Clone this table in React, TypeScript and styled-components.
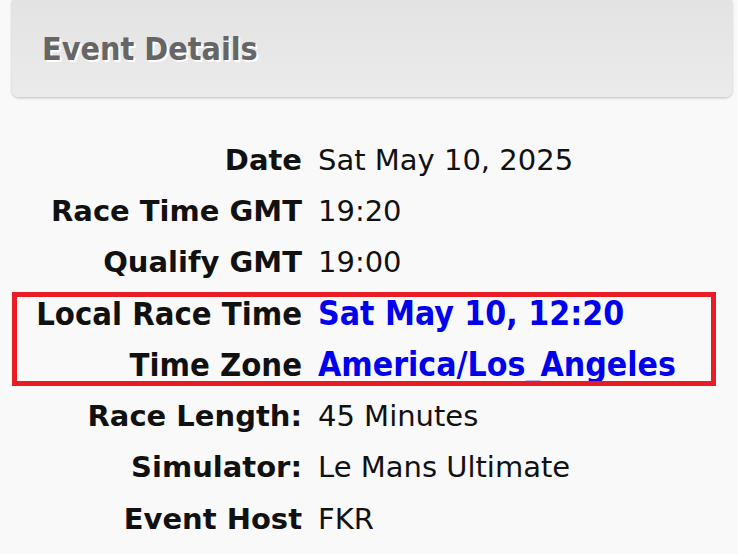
import styled, { createGlobalStyle } from "styled-components";

const GlobalStyle = createGlobalStyle`
  html, body {
    margin: 0;
    padding: 0;
    background: #f9f9f9;
  }
  body {
    font-family: "DejaVu Sans", Verdana, sans-serif;
    color: #111;
  }
`;

const details = [
  { label: "Date", value: "Sat May 10, 2025" },
  { label: "Race Time GMT", value: "19:20" },
  { label: "Qualify GMT", value: "19:00" },
];

const local = [
  { label: "Local Race Time", value: "Sat May 10, 12:20" },
  { label: "Time Zone", value: "America/Los_Angeles" },
];

const more = [
  { label: "Race Length:", value: "45 Minutes" },
  { label: "Simulator:", value: "Le Mans Ultimate" },
  { label: "Event Host", value: "FKR" },
];

const EventDetails = () => {
  return (
    <Page>
      <GlobalStyle />
      <Header>
        <Title>Event Details</Title>
      </Header>
      <Details>
        {details.map((d) => (
          <Row key={d.label}>
            <Label>{d.label}</Label>
            <Value>{d.value}</Value>
          </Row>
        ))}
        <Highlight>
          {local.map((d) => (
            <Row key={d.label}>
              <Label condensed>{d.label}</Label>
              <Value highlight>{d.value}</Value>
            </Row>
          ))}
        </Highlight>
        {more.map((d) => (
          <Row key={d.label}>
            <Label>{d.label}</Label>
            <Value>{d.value}</Value>
          </Row>
        ))}
      </Details>
    </Page>
  );
};

const Page = styled.div`
  width: 738px;
  height: 554px;
  overflow: hidden;
`;

const Header = styled.div`
  margin: 0 6px 0 12px;
  height: 97px;
  display: flex;
  align-items: center;
  padding-left: 30px;
  box-sizing: border-box;
  border-radius: 0 0 7px 7px;
  background: linear-gradient(#e3e3e3, #ebebeb);
  box-shadow: 0 1px 3px rgba(0, 0, 0, 0.25);
`;

const Title = styled.h2`
  margin: 0;
  font-family: "DejaVu Sans Condensed", "DejaVu Sans", sans-serif;
  font-size: 32px;
  font-weight: bold;
  color: #666;
  text-shadow: 2px 2px 0 #fff;
`;

const Details = styled.div`
  margin: 37px 0 0 8px;
  width: 712px;
`;

const Row = styled.div`
  display: grid;
  grid-template-columns: 294px 1fr;
  column-gap: 16px;
  height: 51.3px;
  align-items: center;
  font-size: 29px;
`;

interface LabelProps {
  condensed?: boolean;
}

const Label = styled.div<LabelProps>`
  text-align: right;
  font-weight: bold;
  white-space: nowrap;
  font-family: ${(props) =>
    props.condensed ? '"DejaVu Sans Condensed", sans-serif' : "inherit"};
  font-size: ${(props) => (props.condensed ? "32.5px" : "inherit")};
`;

interface ValueProps {
  highlight?: boolean;
}

const Value = styled.div<ValueProps>`
  white-space: nowrap;
  font-weight: ${(props) => (props.highlight ? "bold" : "normal")};
  color: ${(props) => (props.highlight ? "#0000ee" : "#111")};
  font-family: ${(props) =>
    props.highlight ? '"DejaVu Sans Condensed", sans-serif' : "inherit"};
  font-size: ${(props) => (props.highlight ? "33.5px" : "inherit")};
`;

const Highlight = styled.div`
  outline: 5px solid #e81c24;
  outline-offset: -9px;
`;

export default EventDetails;
